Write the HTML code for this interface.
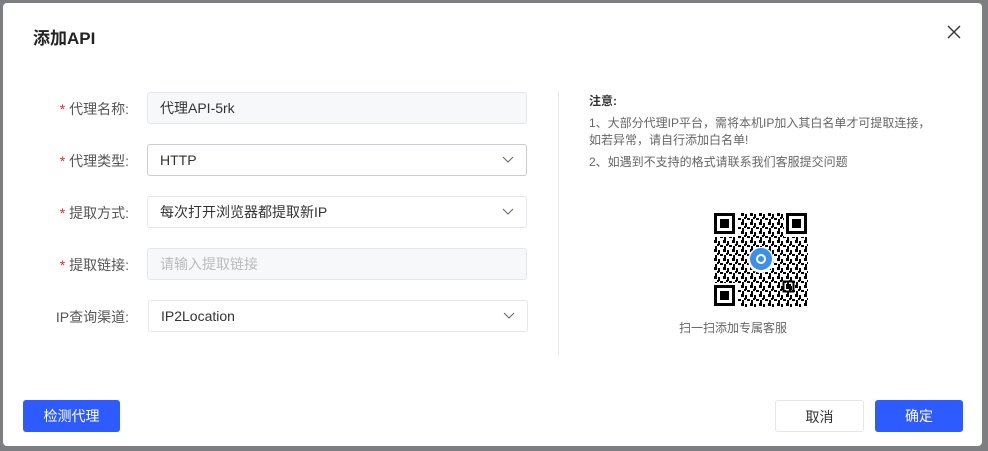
<!DOCTYPE html><html><head><meta charset="utf-8"><style>
*{box-sizing:border-box;margin:0;padding:0}
body{width:988px;height:451px;background:#7d7e82;font-family:"Liberation Sans","Noto Sans CJK SC",sans-serif;position:relative;overflow:hidden;color:#333}
.dlg{position:absolute;left:3px;top:3px;width:979px;height:443px;background:#fff;border-radius:4px}
.t{position:absolute;left:30px;top:21px;font-size:17px;font-weight:bold;color:#222}
.x{position:absolute;left:944px;top:22px}
.lab{position:absolute;width:126px;text-align:right;font-size:14px;color:#555;left:0}
.lab b{color:#f5222d;font-weight:normal}
.in{position:absolute;left:144px;width:380px;height:32px;border:1px solid #e4e6eb;border-radius:3px;font-size:14px;padding-left:12px;line-height:30px;color:#333}
.g{background:#f7f8fa}
.sel svg{position:absolute;right:12px;top:11px}
.vl{position:absolute;left:555px;top:88px;width:1px;height:265px;background:#e8e8e8}
.n{position:absolute;left:586px;font-size:12px;color:#666;line-height:17px}
.btn{position:absolute;height:32px;border-radius:3px;font-size:14px;line-height:32px;text-align:center}
.p{background:#2e5bff;color:#fff}
</style></head><body><div class="dlg">
<div class="t">添加API</div>
<svg class="x" width="14" height="14" viewBox="0 0 14 14"><path d="M1 1L13 13M13 1L1 13" stroke="#333" stroke-width="1.4"/></svg>
<div class="lab" style="top:96px"><b>*</b> 代理名称:</div>
<div class="in g" style="top:89px">代理API-5rk</div>
<div class="lab" style="top:148px"><b>*</b> 代理类型:</div>
<div class="in sel" style="top:141px;border-color:#c9ccd3">HTTP<svg width="12" height="8"><path d="M1 1l5 5 5-5" fill="none" stroke="#666"/></svg></div>
<div class="lab" style="top:200px"><b>*</b> 提取方式:</div>
<div class="in sel" style="top:193px">每次打开浏览器都提取新IP<svg width="12" height="8"><path d="M1 1l5 5 5-5" fill="none" stroke="#666"/></svg></div>
<div class="lab" style="top:252px"><b>*</b> 提取链接:</div>
<div class="in g" style="top:245px;color:#bbb">请输入提取链接</div>
<div class="lab" style="top:304px">IP查询渠道:</div>
<div class="in sel" style="top:297px;left:145px">IP2Location<svg width="12" height="8"><path d="M1 1l5 5 5-5" fill="none" stroke="#666"/></svg></div>
<div class="vl"></div>
<div class="n" style="top:90px;font-weight:bold;color:#333">注意:</div>
<div class="n" style="top:112px">1、大部分代理IP平台，需将本机IP加入其白名单才可提取连接，<br>如若异常，请自行添加白名单!</div>
<div class="n" style="top:151px">2、如遇到不支持的格式请联系我们客服提交问题</div>
<svg style="position:absolute;left:711px;top:210px" width="94" height="94" viewBox="0 0 94 94">
<defs><pattern id="q" width="9" height="9" patternUnits="userSpaceOnUse"><rect x="0" y="0" width="3" height="3"/><rect x="4" y="1" width="2" height="4"/><rect x="6" y="5" width="3" height="2"/><rect x="1" y="6" width="2" height="3"/><rect x="3" y="4" width="2" height="2"/></pattern></defs>
<rect width="94" height="94" fill="url(#q)"/>
<g fill="#fff"><rect width="24" height="24"/><rect x="70" width="24" height="24"/><rect y="70" width="24" height="24"/></g>
<g fill="none" stroke="#000" stroke-width="3"><rect x="1.5" y="1.5" width="18" height="18"/><rect x="73.5" y="1.5" width="18" height="18"/><rect x="1.5" y="73.5" width="18" height="18"/><rect x="69.5" y="68.5" width="10" height="10" stroke-width="2"/></g>
<g><rect x="6" y="6" width="9" height="9"/><rect x="78" y="6" width="9" height="9"/><rect x="6" y="78" width="9" height="9"/><rect x="72" y="71" width="5" height="5"/></g>
<circle cx="47" cy="47" r="13" fill="#fff"/><circle cx="47" cy="46" r="11" fill="#3a8ff0"/><circle cx="47" cy="46" r="5" fill="#fff"/><circle cx="47" cy="46" r="3" fill="#3a8ff0"/>
</svg>
<div class="n" style="top:317px;left:676px;font-size:12px">扫一扫添加专属客服</div>
<div class="btn p" style="left:20px;top:397px;width:97px">检测代理</div>
<div class="btn" style="left:772px;top:397px;width:89px;border:1px solid #e4e6eb;color:#333">取消</div>
<div class="btn p" style="left:872px;top:397px;width:88px">确定</div>
</div></body></html>
